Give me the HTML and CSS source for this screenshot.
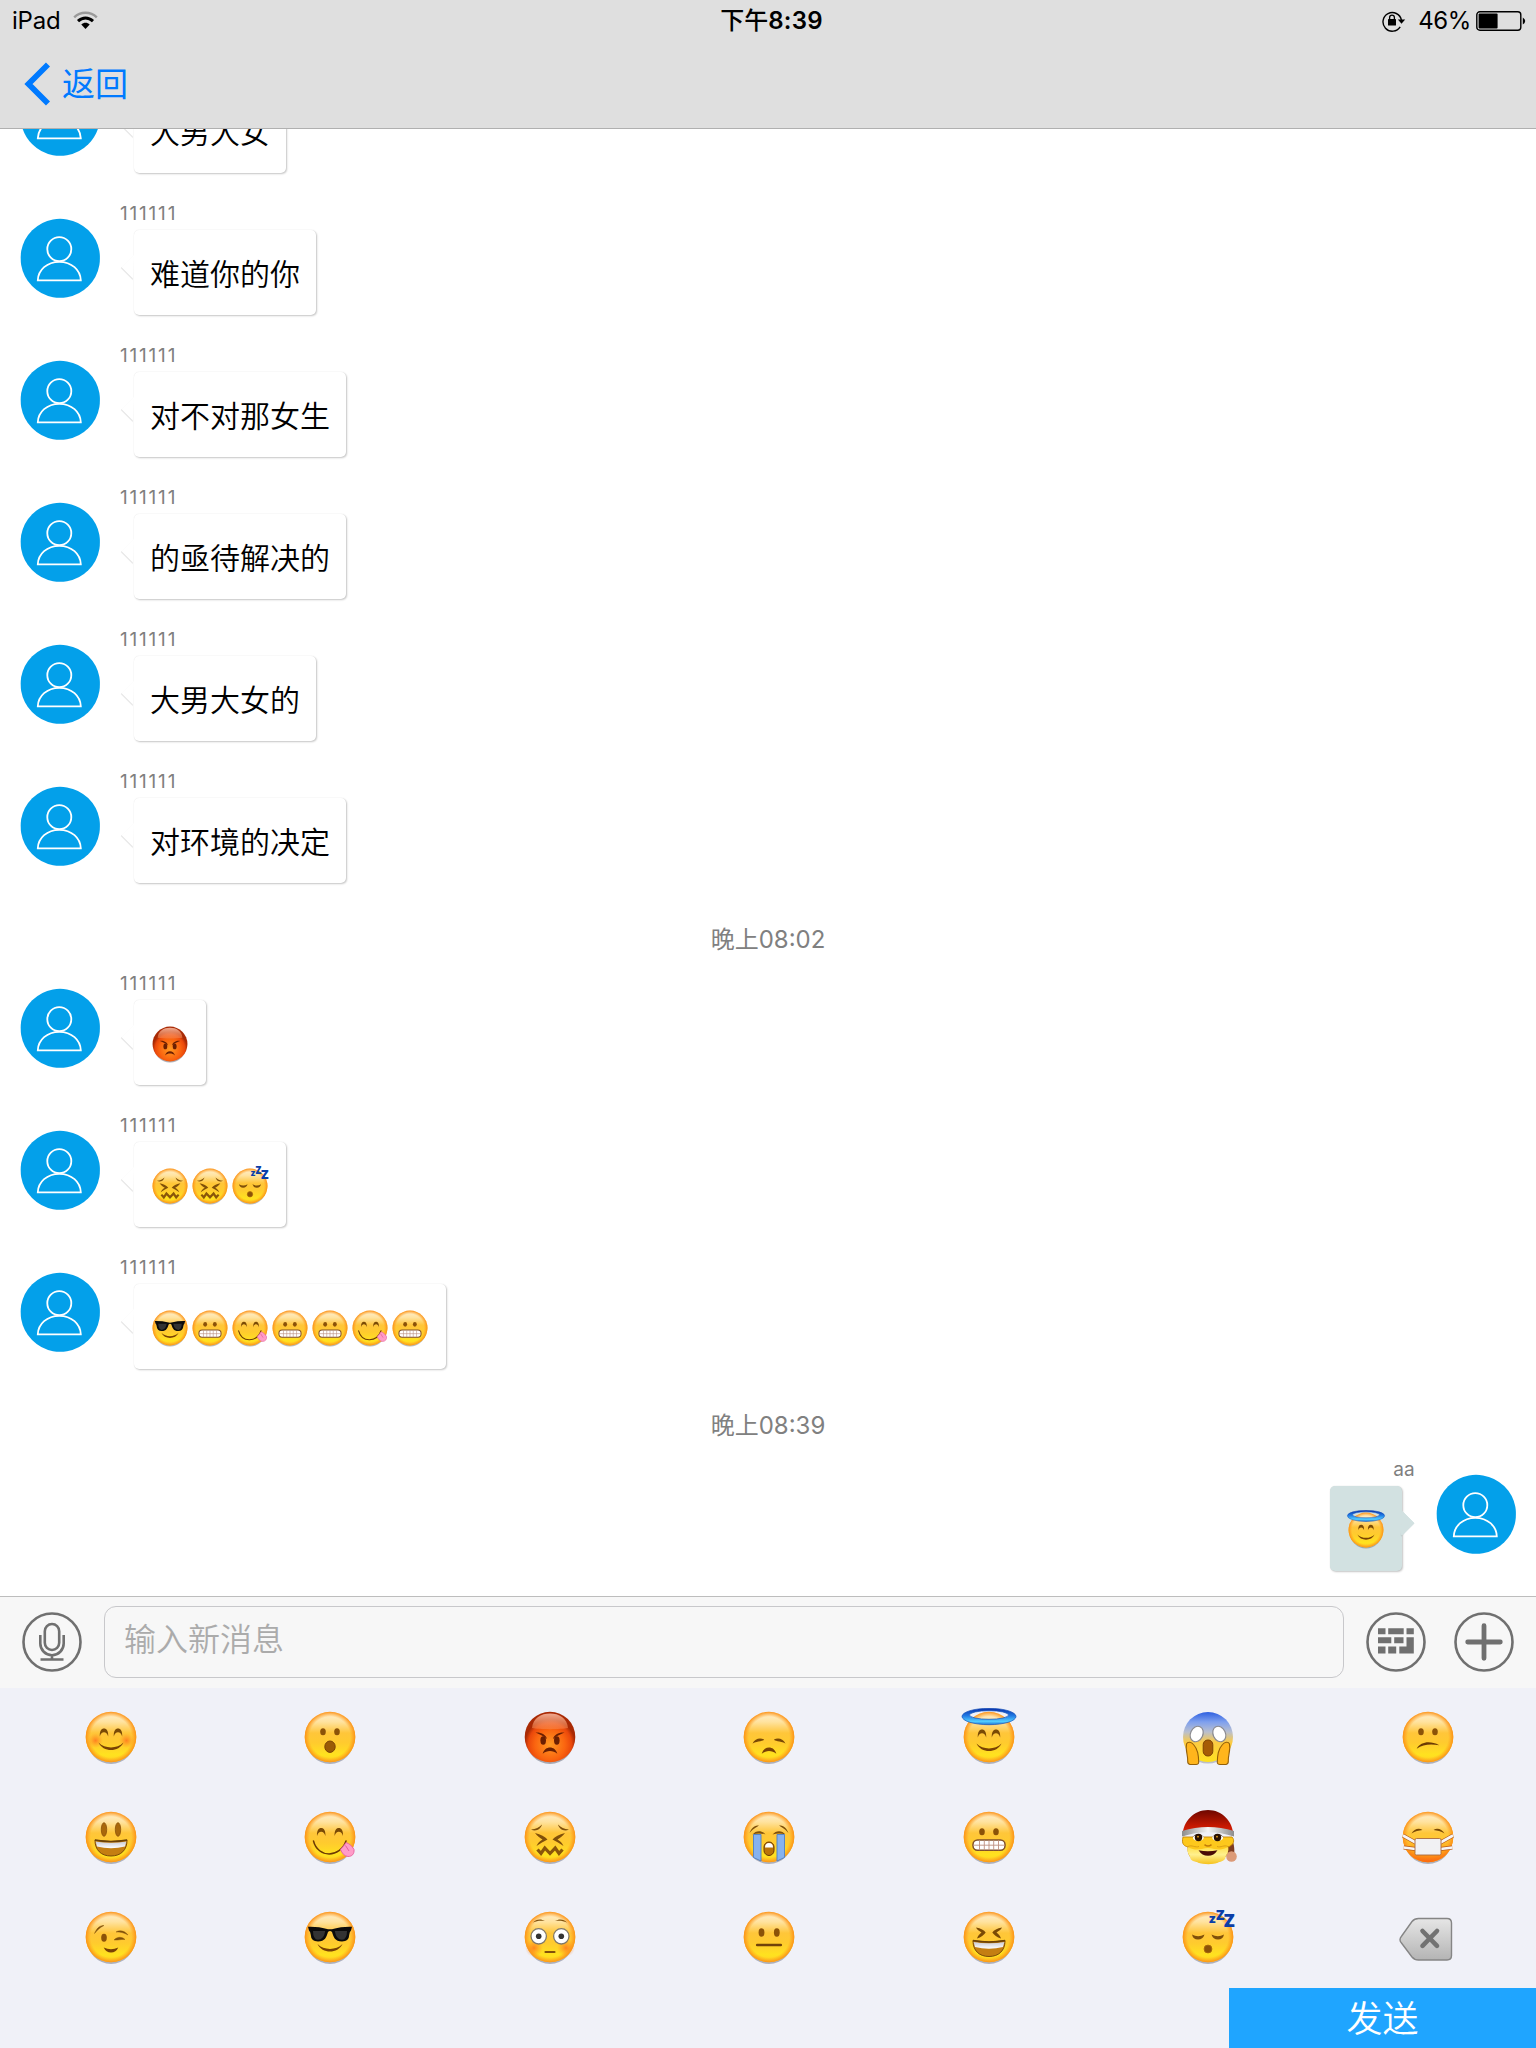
FILE: index.html
```html
<!DOCTYPE html>
<html lang="zh-CN">
<head>
<meta charset="utf-8">
<title>聊天</title>
<link rel="stylesheet" href="styles.css">
</head>
<body>
<svg class="sprite" width="0" height="0" aria-hidden="true">
  <defs>
    <linearGradient id="skin" x1="0" y1="0" x2="0" y2="1"><stop offset="0" stop-color="#fff0cf"/><stop offset=".2" stop-color="#ffe3a0"/><stop offset=".42" stop-color="#ffc63a"/><stop offset=".62" stop-color="#ffcb2e"/><stop offset=".85" stop-color="#ffe21f"/><stop offset="1" stop-color="#ffd324"/></linearGradient>
    <radialGradient id="edge"><stop offset=".8" stop-color="#ff9d1e" stop-opacity="0"/><stop offset="1" stop-color="#fb9218"/></radialGradient>
    <radialGradient id="blush"><stop offset="0" stop-color="#ff6a1c" stop-opacity=".75"/><stop offset="1" stop-color="#ff8a1c" stop-opacity="0"/></radialGradient>
    <radialGradient id="rage" cx=".5" cy=".65"><stop offset="0" stop-color="#ff9a22"/><stop offset=".6" stop-color="#fa6410"/><stop offset=".85" stop-color="#ea480b"/><stop offset="1" stop-color="#a92a05"/></radialGradient>
    <linearGradient id="gloss" x1="0" y1="0" x2="0" y2="1"><stop offset="0" stop-color="#f6b7a0" stop-opacity=".9"/><stop offset="1" stop-color="#f98a50" stop-opacity=".5"/></linearGradient>
    <linearGradient id="fear" x1="0" y1="0" x2="0" y2="1"><stop offset="0" stop-color="#2e5fe0"/><stop offset=".2" stop-color="#7fa0ee"/><stop offset=".4" stop-color="#b9bfce"/><stop offset=".6" stop-color="#fbca45"/><stop offset="1" stop-color="#ffe21f"/></linearGradient>
    <linearGradient id="halo" x1="0" y1="0" x2="0" y2="1"><stop offset="0" stop-color="#0a2fa8"/><stop offset=".45" stop-color="#2079e4"/><stop offset=".8" stop-color="#52cdff"/><stop offset="1" stop-color="#1f77d8"/></linearGradient>
    <linearGradient id="hat" x1="0" y1="0" x2="0" y2="1"><stop offset="0" stop-color="#6d0700"/><stop offset=".6" stop-color="#c41800"/><stop offset="1" stop-color="#e02810"/></linearGradient>
    <linearGradient id="band"><stop offset="0" stop-color="#8d8d8d"/><stop offset=".5" stop-color="#f4f4f4"/><stop offset="1" stop-color="#8d8d8d"/></linearGradient>
    <linearGradient id="beard" x1="0" y1="0" x2="0" y2="1"><stop offset="0" stop-color="#ffe14e"/><stop offset=".45" stop-color="#fff08e"/><stop offset="1" stop-color="#f6c21c"/></linearGradient>
    <linearGradient id="key" x1="0" y1="0" x2="0" y2="1"><stop offset="0" stop-color="#e6e6e6"/><stop offset="1" stop-color="#b4b4b4"/></linearGradient>
    <linearGradient id="fever" x1="0" y1="0" x2="0" y2="1"><stop offset=".5" stop-color="#ff8a1c" stop-opacity="0"/><stop offset="1" stop-color="#fb6a10"/></linearGradient>
    <linearGradient id="teeth" x1="0" y1="0" x2="0" y2="1"><stop offset="0" stop-color="#c9c9d2"/><stop offset="1" stop-color="#fff"/></linearGradient>

    <g id="base"><ellipse cy="2.2" rx="24" ry="24.8" fill="#5b5f70" opacity=".45"/><circle r="25.3" fill="url(#skin)"/><circle r="25.3" fill="url(#edge)"/></g>
    <path id="happy-eye" d="M-4.2 3.5C-4.5-2-2.6-4.5 0-4.5S4.5-2 4.2 3.5C3.2 .3 2 -.8 0 -.8S-3.2 .3-4.2 3.5Z" fill="#7a4a05"/>
    <g id="dots" fill="#8b5208"><ellipse cx="-7" cy="-5.3" rx="2.8" ry="3.5"/><ellipse cx="7" cy="-5.3" rx="2.8" ry="3.5"/></g>
    <path id="smile" d="M-12.5 5.5C-6 12 6 12 12.5 5.5C8 15.5-8 15.5-12.5 5.5Z" fill="#7a4204"/>
    <path id="frown" d="M-7.3 16.7C-5 8.5 5 8.5 7.3 16.7C3 13-3 13-7.3 16.7Z" fill="#7a4204"/>
    <g id="grin"><path d="M-16 3.2Q0 6 16 3.2C16 13 10 19 0 19S-16 13-16 3.2Z" fill="#c47e12" stroke="#7a4a08" stroke-width="1"/><path d="M-15.4 4.4Q0 7 15.4 4.4L14 9.5Q0 13-14 9.5Z" fill="url(#teeth)"/><path d="M-16.2 3Q0 6 16.2 3" fill="none" stroke="#6b4108" stroke-width="1.6"/></g>

    <symbol id="e-blush" viewBox="-29 -29 58 58"><use href="#base"/><circle cx="-15.5" cy="3.5" r="7.5" fill="url(#blush)"/><circle cx="15.5" cy="3.5" r="7.5" fill="url(#blush)"/><use href="#happy-eye" x="-7" y="-4"/><use href="#happy-eye" x="7" y="-4"/><use href="#smile"/></symbol>
    <symbol id="e-hushed" viewBox="-29 -29 58 58"><use href="#base"/><use href="#dots"/><ellipse cy="9.7" rx="5.2" ry="5.7" fill="#9a5a06" stroke="#7a4204"/></symbol>
    <symbol id="e-rage" viewBox="-29 -29 58 58"><ellipse cy="2.2" rx="24" ry="24.8" fill="#5b5f70" opacity=".5"/><circle r="25.3" fill="url(#rage)"/><path d="M-18-9C-17-19-9-23.5 0-23.5S17-19 18-9C11-7.5-11-7.5-18-9Z" fill="url(#gloss)"/><g fill="#6b1f02"><ellipse cx="-6.8" cy="3.5" rx="2.8" ry="4.2"/><ellipse cx="6.8" cy="3.5" rx="2.8" ry="4.2"/><path d="M-14.5-4.5C-9-5-4-2.5-3 2C-6-1-10-2.5-14.5-4.5ZM14.5-4.5C9-5 4-2.5 3 2C6-1 10-2.5 14.5-4.5Z"/><path d="M-7.3 16.7C-5 8.5 5 8.5 7.3 16.7C3 13-3 13-7.3 16.7Z"/></g></symbol>
    <symbol id="e-sad" viewBox="-29 -29 58 58"><use href="#base"/><path d="M-16.5 6.5C-14 1.5-9 .5-5 2.5C-5 4.5-11 3.5-16.5 6.5ZM16.5 6.5C14 1.5 9 .5 5 2.5C5 4.5 11 3.5 16.5 6.5Z" fill="#7a4a05"/><use href="#frown"/></symbol>
    <symbol id="e-angel" viewBox="-29 -29 58 58"><use href="#base"/><use href="#happy-eye" x="-7" y="-3"/><use href="#happy-eye" x="7" y="-3"/><use href="#smile" y="1"/><path fill-rule="evenodd" d="M-27-20.5a27 8.2 0 1 1 54 0a27 8.2 0 1 1-54 0ZM-19.5-22a19.5 4.3 0 1 0 39 0a19.5 4.3 0 1 0-39 0Z" fill="url(#halo)" stroke="#1550b8" stroke-width=".7"/></symbol>
    <symbol id="e-scream" viewBox="-29 -29 58 58"><ellipse cy="2" rx="24" ry="24.6" fill="#5b5f70" opacity=".35"/><circle r="25" fill="url(#fear)"/><g fill="#fff" stroke="#8a8a90" stroke-width="1.2"><ellipse cx="-11.3" cy="-3" rx="6.2" ry="8" transform="rotate(25 -11.3 -3)"/><ellipse cx="11.3" cy="-3" rx="6.2" ry="8" transform="rotate(-25 11.3 -3)"/></g><rect x="-4.8" y="3" width="9.6" height="16" rx="4.6" fill="#a65c06" stroke="#7d4404"/><g fill="#ffb51c" stroke="#94600a" stroke-width="1.1"><path d="M-21.5 7C-20.5 4.5-17 4.5-14.5 7.5C-10 12.5-9.5 18-9.3 25.5Q-9.5 27.5-12 27.5H-18Q-20.5 27-20.3 24C-20 18-22.8 13-21.5 7Z"/><path d="M21.5 7C20.5 4.5 17 4.5 14.5 7.5C10 12.5 9.5 18 9.3 25.5Q9.5 27.5 12 27.5H18Q20.5 27 20.3 24C20 18 22.8 13 21.5 7Z"/></g></symbol>
    <symbol id="e-confused" viewBox="-29 -29 58 58"><use href="#base"/><use href="#dots"/><path d="M-11.3 11.7C-7 4.5 2 3.5 11.3 8.2C3 6.8-5 7-11.3 11.7Z" fill="#6b3a04"/></symbol>
    <symbol id="e-smiley" viewBox="-29 -29 58 58"><use href="#base"/><g fill="#a9680b" stroke="#8b5208" stroke-width=".8"><ellipse cx="-7" cy="-7.5" rx="2.7" ry="6.8"/><ellipse cx="7" cy="-7.5" rx="2.7" ry="6.8"/></g><use href="#grin"/></symbol>
    <symbol id="e-yum" viewBox="-29 -29 58 58"><use href="#base"/><use href="#happy-eye" x="-8.8" y="-4.5"/><use href="#happy-eye" x="8.8" y="-4.5"/><path d="M-16.5 4C-12 21.5 10 21 16 4" fill="none" stroke="#6b3a04" stroke-width="1.5" stroke-linecap="round"/><path d="M16 5.5C14 9 12 10.5 10.5 12.5C12 16 14 19 18 19.5C22 19.5 24.5 17 24 12.5C22 9 20 7 16 5.5Z" fill="#ff9cc8" stroke="#e5609b" stroke-width=".9"/><path d="M15.5 8.5L19 14" stroke="#e5609b"/></symbol>
    <symbol id="e-confounded" viewBox="-29 -29 58 58"><use href="#base"/><path d="M-19-7.5C-14-8-11-9.5-8-12.5C-9-8-14-5-19-7.5ZM19-7.5C14-8 11-9.5 8-12.5C9-8 14-5 19-7.5ZM-15-4C-9-2.5-5-.5-2.5 2.5C-6 4.5-10 6.5-13.5 9C-12 5.5-10 4-7.5 2.5C-10 1-13-1-15-4ZM15-4C9-2.5 5-.5 2.5 2.5C6 4.5 10 6.5 13.5 9C12 5.5 10 4 7.5 2.5C10 1 13-1 15-4Z" fill="#80500a"/><path d="M-12.5 12.5L-9 16.5L-5.2 11L0 16.5L5.2 11L9 16.5L12.5 12.5" fill="none" stroke="#8a560a" stroke-width="3.2"/></symbol>
    <symbol id="e-sob" viewBox="-29 -29 58 58"><use href="#base"/><path d="M-19.5-4C-17-10-14-11.5-10-11.5C-14-9-16-8-19.5-4ZM19.5-4C17-10 14-11.5 10-11.5C14-9 16-8 19.5-4ZM-16.5-2.5C-13-7-7-7-3.5-2.5C-8-4-12-4-16.5-2.5ZM16.5-2.5C13-7 7-7 3.5-2.5C8-4 12-4 16.5-2.5Z" fill="#80500a"/><path d="M-15.5-2.5H-8V24L-15.5 20.5ZM15.5-2.5H8V24L15.5 20.5Z" fill="#86b2ee" stroke="#4b7fc8" stroke-width=".9"/><rect x="-5" y="5" width="10" height="13.5" rx="5" fill="#bb7408" stroke="#6b3a04"/><path d="M-4 10.5Q-4 6 0 6T4 10.5Z" fill="#fff"/></symbol>
    <symbol id="e-grimace" viewBox="-29 -29 58 58"><use href="#base"/><use href="#dots"/><rect x="-16" y="3" width="32" height="10.3" rx="4.5" fill="#fff" stroke="#80502a" stroke-width="1.5"/><path d="M-16 8.2H16M-9.5 3.2V13.2M-4.7 3.2V13.2M0 3.2V13.2M4.7 3.2V13.2M9.5 3.2V13.2" stroke="#bd9080" stroke-width=".9"/></symbol>
    <symbol id="e-santa" viewBox="-29 -29 58 58"><path d="M19 3C26 0 27 10 26 20L20 18Z" fill="#7d3c22"/><circle cx="23.5" cy="19.5" r="5.3" fill="#dc9a78"/><path d="M-25 0C-27 8-23 9-20 10C-21 20-14 26 0 26S20 20 20 10C26 8 27 3 24 0Z" fill="#fdc81c" stroke="#c58708" stroke-width=".9"/><path d="M-20 10C-22 16-17 19-17.5 22C-15 25-11 24.5-9 26C-4 27.5 5 27.5 9 26C12 24.5 16 24.5 17.5 21C17 18 21.5 16 20 10C14 13 10 12.8 6 12Q0 10-6 12C-10 12.8-15 13-20 10Z" fill="url(#beard)"/><path d="M-20 9.5C-16 7.5-13 11-9 9.5M20 9.5C16 7.5 13 11 9 9.5" fill="none" stroke="#dca014"/><path d="M-25.5-1C-25-16-14-27 0-27S25-16 25.5-1Q0-13-25.5-1Z" fill="url(#hat)"/><path d="M-26-6Q0-14 26-6V-.5Q0-9-26-.5Z" fill="url(#band)"/><ellipse cx="-9.7" cy=".7" rx="5.4" ry="3.3" fill="#fff"/><ellipse cx="9.7" cy=".7" rx="5.4" ry="3.3" fill="#fff"/><g fill="#2a1202"><circle cx="-9.5" cy=".5" r="3.7"/><circle cx="9.5" cy=".5" r="3.7"/><path d="M-16 .5Q-10-6-4 0Q-10-4-16 .5ZM16 .5Q10-6 4 0Q10-4 16 .5Z"/></g><circle cx="-10" cy="-.3" r=".9" fill="#e8a020"/><circle cx="9" cy="-.3" r=".9" fill="#e8a020"/><path d="M-3.5 7.7Q0 10.5 3.5 7.7" fill="none" stroke="#c27a08" stroke-width="1.5"/><path d="M-9.5 13.2Q0 15.5 9.5 13.2Q6 18.7 0 18.7T-9.5 13.2Z" fill="#4a0c06"/></symbol>
    <symbol id="e-mask" viewBox="-29 -29 58 58"><use href="#base"/><circle r="25.3" fill="url(#fever)"/><path d="M-16.5-3.5C-14-8-9-9.5-5.5-7C-9-6.5-13-6-16.5-3.5ZM16.5-3.5C14-8 9-9.5 5.5-7C9-6.5 13-6 16.5-3.5Z" fill="#7a4a05"/><path d="M-25-1.5L-12.5 5.5M25-1.5L12.5 5.5M-24.3 10.5L-12.5 12M24.3 10.5L12.5 12" stroke="#b85a18" stroke-width="4"/><path d="M-25-1.5L-12.5 5.5M25-1.5L12.5 5.5M-24.5 10.5L-12.5 12M24.5 10.5L12.5 12" stroke="#f6f6f8" stroke-width="2.6"/><rect x="-13" y="1.5" width="26" height="16.5" rx="1.5" fill="#f1f1f3" stroke="#a86a40" stroke-width=".9"/></symbol>
    <symbol id="e-wink" viewBox="-29 -29 58 58"><use href="#base"/><ellipse cx="-7" cy=".8" rx="2.8" ry="4" fill="#8b5208"/><path d="M-16.5-3.5C-14-9.5-11-11.5-7-11.5C-11-9.5-13-7.5-16.5-3.5ZM5-5C9-7.5 14-6 17-2C13-4.5 9-5 5-5ZM3 3C6-.5 11-.5 14 2.5C10 2 7 3.5 3 3Z" fill="#80500a" stroke="#80500a" stroke-width=".4"/><path d="M-7.3 10.5Q0 14 7.3 10.5Q5 15.5 0 15.5T-7.3 10.5Z" fill="#7a4204"/></symbol>
    <symbol id="e-cool" viewBox="-29 -29 58 58"><use href="#base"/><use href="#smile" y="1.5"/><path d="M-22-10.2Q-11-10.5-4-8.2Q0-7.2 4-8.2Q11-10.5 22-10.2L21-6.5Q19.5-5 19.3-2.5Q19 4.5 12 4.5C5 4.5 3.5 0 2-5Q0-7-2-5C-3.5 0-5 4.5-12 4.5Q-19 4.5-19.3-2.5Q-19.5-5-21-6.5Z" fill="#0b0b0b"/><path d="M-17-6H-4.8Q-6 2.5-12 2.8-17 2.5-17-6ZM17-6H4.8Q6 2.5 12 2.8 17 2.5 17-6Z" fill="#333"/></symbol>
    <symbol id="e-flushed" viewBox="-29 -29 58 58"><use href="#base"/><circle cx="-16" cy="11" r="9" fill="url(#blush)"/><circle cx="16" cy="11" r="9" fill="url(#blush)"/><path d="M-17-14.5C-14-18-9-18.5-5-16C-9-16.5-13-16.5-17-14.5ZM17-14.5C14-18 9-18.5 5-16C9-16.5 13-16.5 17-14.5Z" fill="#80500a"/><g fill="#fff" stroke="#807868" stroke-width="1.3"><circle cx="-11.3" cy="-.7" r="7.7"/><circle cx="11.3" cy="-.7" r="7.7"/></g><circle cx="-11.3" cy="-.7" r="2.8" fill="#333"/><circle cx="11.3" cy="-.7" r="2.8" fill="#333"/><path d="M-4.5 15H4.5" stroke="#80500a" stroke-width="2.2" stroke-linecap="round"/></symbol>
    <symbol id="e-neutral" viewBox="-29 -29 58 58"><use href="#base"/><g fill="#8b5208"><ellipse cx="-7.5" cy="-4.5" rx="2.9" ry="4.2"/><ellipse cx="7.8" cy="-4.5" rx="2.9" ry="4.2"/></g><path d="M-11.8 8H11.8" stroke="#70420a" stroke-width="2.6" stroke-linecap="round"/></symbol>
    <symbol id="e-laugh" viewBox="-29 -29 58 58"><use href="#base"/><path d="M-13-9.5C-8-8.5-5-7-3.3-4.5C-5-2.5-8 .5-12 1.5C-11-1.5-9.5-3-7.5-4.5C-10-6-12-7.5-13-9.5ZM13-9.5C8-8.5 5-7 3.3-4.5C5-2.5 8 .5 12 1.5C11-1.5 9.5-3 7.5-4.5C10-6 12-7.5 13-9.5Z" fill="#7a4a05"/><use href="#grin" y=".5"/></symbol>
    <symbol id="e-sleep" viewBox="-29 -29 58 58"><use href="#base"/><path d="M-16-2.5Q-10 1-3.5-2.5Q-5 2.5-10 2.5T-16-2.5ZM16-2.5Q10 1 3.5-2.5Q5 2.5 10 2.5T16-2.5Z" fill="#80500a"/><circle cy="12" r="3.9" fill="#8b5208" stroke="#a9680b"/><g class="zzz"><text x="1" y="-14" font-size="13">z</text><text x="8" y="-17" font-size="14">Z</text><text x="15.8" y="-9.7" font-size="18">Z</text></g></symbol>
    <symbol id="e-delete" viewBox="-29 -29 58 58"><path d="M-28 2.7Q-28 1-26.5-.8L-16-15.5Q-13.5-18.5-9.5-18.5H19Q23.5-18.5 23.5-14V18.5Q23.5 23 19 23H-9.5Q-13.5 23-16 20L-26.5 6Q-28 4.5-28 2.7Z" fill="url(#key)" stroke="#858585" stroke-width="1.4"/><path d="M-5.5-6L9 8.8M9-6L-5.5 8.8" stroke="#727272" stroke-width="4.6" stroke-linecap="round"/></symbol>

    <symbol id="person" viewBox="0 0 80 80"><path d="M33 1.4Q40 .3 47 1.4A39.6 39.6 0 0 1 79.4 33Q80.4 40 79.4 47A39.6 39.6 0 0 1 47 79.2Q40 80.2 33 79.2A39.6 39.6 0 0 1 1.2 47Q.2 40 1.2 33A39.6 39.6 0 0 1 33 1.4Z" fill="#03a0ea"/><g fill="none" stroke="#fff" stroke-width="1.8"><circle cx="39.3" cy="31.2" r="12"/><path d="M17.8 62.3C18.2 52 27 43.8 39.3 43.8S60.4 52 60.8 62.3Z"/></g></symbol>
  </defs>
</svg>

<header class="header">
  <div class="status">
    <div class="status-left">iPad
      <svg width="25" height="19" viewBox="0 0 25 19" fill="none"><path d="M1.2 6.3C7.5 .3 17.5 .3 23.8 6.3" stroke="#9a9a9a" stroke-width="2.4"/><path d="M5 10.2C9.5 6 15.5 6 20 10.2" stroke="#000" stroke-width="3"/><path d="M8.3 13.6C10.8 11.2 14.2 11.2 16.7 13.6L12.5 18Z" fill="#000"/></svg>
    </div>
    <div class="status-time">下午<b>8:39</b></div>
    <div class="status-right">
      <svg width="24" height="22" viewBox="0 0 24 22"><path d="M18.2 16.8A9.3 9.3 0 1 1 19.4 10" fill="none" stroke="#000" stroke-width="1.4"/><path d="M15.8 9.5H23.2L19.5 13.8Z"/><rect x="6" y="9" width="8" height="6.5" rx=".6"/><path d="M7.6 9.5V7.5Q7.6 5.2 10 5.2T12.4 7.5V9.5" fill="none" stroke="#000" stroke-width="1.3"/></svg>
      <span>46%</span>
      <svg width="50" height="20" viewBox="0 0 50 20"><rect x=".8" y=".8" width="44" height="18.4" rx="3" fill="none" stroke="#000" stroke-width="1.4"/><rect x="2.6" y="2.6" width="19" height="14.8" rx="1"/><path d="M46.8 6.5Q49.2 8 49.2 10T46.8 13.5Z"/></svg>
    </div>
  </div>
  <nav class="nav">
    <svg width="27" height="44" viewBox="0 0 27 44"><path d="M25 2.5L5.5 22L25 41.5" fill="none" stroke="#007aff" stroke-width="5.8"/></svg>
    <span>返回</span>
  </nav>
</header>

<main class="chat">
  <div class="thread">
    <div class="msg"><svg class="avatar"><use href="#person"/></svg><div class="body"><div class="name"></div><div class="bubble">大男大女</div></div></div>
    <div class="msg"><svg class="avatar"><use href="#person"/></svg><div class="body"><div class="name">111111</div><div class="bubble">难道你的你</div></div></div>
    <div class="msg"><svg class="avatar"><use href="#person"/></svg><div class="body"><div class="name">111111</div><div class="bubble">对不对那女生</div></div></div>
    <div class="msg"><svg class="avatar"><use href="#person"/></svg><div class="body"><div class="name">111111</div><div class="bubble">的亟待解决的</div></div></div>
    <div class="msg"><svg class="avatar"><use href="#person"/></svg><div class="body"><div class="name">111111</div><div class="bubble">大男大女的</div></div></div>
    <div class="msg"><svg class="avatar"><use href="#person"/></svg><div class="body"><div class="name">111111</div><div class="bubble">对环境的决定</div></div></div>
    <div class="date">晚上08:02</div>
    <div class="msg"><svg class="avatar"><use href="#person"/></svg><div class="body"><div class="name">111111</div><div class="bubble"><svg class="emo"><use href="#e-rage"/></svg></div></div></div>
    <div class="msg"><svg class="avatar"><use href="#person"/></svg><div class="body"><div class="name">111111</div><div class="bubble"><svg class="emo"><use href="#e-confounded"/></svg><svg class="emo"><use href="#e-confounded"/></svg><svg class="emo"><use href="#e-sleep"/></svg></div></div></div>
    <div class="msg"><svg class="avatar"><use href="#person"/></svg><div class="body"><div class="name">111111</div><div class="bubble"><svg class="emo"><use href="#e-cool"/></svg><svg class="emo"><use href="#e-grimace"/></svg><svg class="emo"><use href="#e-yum"/></svg><svg class="emo"><use href="#e-grimace"/></svg><svg class="emo"><use href="#e-grimace"/></svg><svg class="emo"><use href="#e-yum"/></svg><svg class="emo"><use href="#e-grimace"/></svg></div></div></div>
    <div class="date">晚上08:39</div>
    <div class="msg mine"><svg class="avatar"><use href="#person"/></svg><div class="body"><div class="name">aa</div><div class="bubble"><svg class="emo"><use href="#e-angel"/></svg></div></div></div>
  </div>
</main>

<section class="toolbar">
  <svg class="tool" viewBox="-30 -30 60 60"><circle r="28.5"/><rect x="-7.2" y="-18" width="14.4" height="26" rx="7.2"/><path d="M-11.7-7V1.5A11.7 11.7 0 0 0 11.7 1.5V-7M0 13V17.5M-11.5 17.5H11.5"/></svg>
  <div class="field">输入新消息</div>
  <svg class="tool" viewBox="-30 -30 60 60"><circle r="28.5"/><path class="solid" d="M-18-13.7h7.5v6h-7.5zM-7.8-13.7h15.5v6H-7.8zM10.5-13.7h7.3v6h-7.3zM-18-4.7h13.3v6H-18zM-1.8-4.7h9.3v6h-9.3zM10.5-4.7h7.3v16.2H3.3V4.4h7.2zM-18 4.5h7.5v7h-7.5zM-7.8 4.5h8v7h-8z"/></svg>
  <svg class="tool" viewBox="-30 -30 60 60"><circle r="28.5"/><path class="thick" d="M-16.3 0H16.3M0-16.3V16.3"/></svg>
</section>

<section class="panel">
  <div class="grid">
    <svg><use href="#e-blush"/></svg><svg><use href="#e-hushed"/></svg><svg><use href="#e-rage"/></svg><svg><use href="#e-sad"/></svg><svg><use href="#e-angel"/></svg><svg><use href="#e-scream"/></svg><svg><use href="#e-confused"/></svg>
    <svg><use href="#e-smiley"/></svg><svg><use href="#e-yum"/></svg><svg><use href="#e-confounded"/></svg><svg><use href="#e-sob"/></svg><svg><use href="#e-grimace"/></svg><svg><use href="#e-santa"/></svg><svg><use href="#e-mask"/></svg>
    <svg><use href="#e-wink"/></svg><svg><use href="#e-cool"/></svg><svg><use href="#e-flushed"/></svg><svg><use href="#e-neutral"/></svg><svg><use href="#e-laugh"/></svg><svg><use href="#e-sleep"/></svg><svg><use href="#e-delete"/></svg>
  </div>
  <button class="send">发送</button>
</section>
</body>
</html>
```
FILE: styles.css
```css
* { box-sizing: border-box; }
body {
  margin: 0;
  width: 1536px;
  height: 2048px;
  display: flex;
  flex-direction: column;
  overflow: hidden;
  background: #fff;
  color: #000;
  font-family: Inter, "Noto Sans CJK SC", sans-serif;
}
svg { display: block; flex: none; }
.sprite { position: absolute; }
.zzz { font-family: "Open Sans", sans-serif; font-weight: 800; fill: #0b3ea8; }

.header {
  height: 129px;
  flex: none;
  background: #dfdfdf;
  border-bottom: 1px solid #b0b0b0;
}
.status {
  height: 40px;
  display: grid;
  grid-template-columns: 1fr auto 1fr;
  align-items: center;
  padding: 1px 10px 0 12px;
  font-size: 24px;
  line-height: 38px;
}
.status-left, .status-right { display: flex; align-items: center; }
.status-left { gap: 12px; letter-spacing: -.2px; }
.status-right { justify-content: flex-end; }
.status-right span { margin: 0 5px 0 12px; letter-spacing: -.4px; }
.status-time { font-weight: 500; padding-left: 5px; }
.status-time b { font-weight: 600; letter-spacing: .2px; }
.nav {
  height: 88px;
  display: flex;
  align-items: center;
  padding-left: 23px;
  gap: 12px;
  color: #007aff;
  font-size: 33px;
}
.nav span { padding-bottom: 4px; }

.chat { flex: 1; min-height: 0; overflow: hidden; }
.thread { margin-top: -71px; }
.msg { height: 142px; display: flex; padding: 0 20px; }
.avatar { width: 80px; height: 80px; margin-top: 18px; }
.body { display: flex; flex-direction: column; align-items: flex-start; margin-left: 20px; }
.name { height: 30px; line-height: 27px; font-size: 19px; color: #808080; letter-spacing: 1.8px; }
.bubble {
  position: relative;
  height: 85px;
  margin-left: 14px;
  padding: 3px 16px 0;
  display: flex;
  align-items: center;
  border-radius: 5px;
  background: #fff;
  box-shadow: 1px 1px 2px rgba(0, 0, 0, .22), 0 0 1px rgba(0, 0, 0, .12);
  font-size: 30px;
  font-weight: 350;
  line-height: 44px;
  white-space: nowrap;
}
.bubble::before {
  content: "";
  position: absolute;
  left: -9px;
  top: 28px;
  width: 18px;
  height: 18px;
  background: #fff;
  transform: rotate(45deg);
  box-shadow: 0 1px 1px rgba(0, 0, 0, .12);
  clip-path: polygon(0 0, 0 110%, 100% 110%);
}
.emo { width: 40px; height: 40px; }
.date { height: 60px; line-height: 59px; text-align: center; font-size: 24px; color: #808080; }

.mine { flex-direction: row-reverse; }
.mine .body { align-items: flex-end; margin: 0 20px 0 0; }
.mine .name { padding-right: 1px; letter-spacing: .2px; }
.mine .bubble { margin: 0 14px 0 0; background: #d2e1e1; }
.mine .bubble::before { left: auto; right: -9px; background: #d2e1e1; clip-path: polygon(0 0, 110% 0, 110% 110%, 100% 110%); }

.toolbar {
  height: 92px;
  flex: none;
  display: flex;
  align-items: center;
  padding: 0 22px 1px;
  background: #f7f7f7;
  border-top: 1px solid #bdbdbd;
}
.tool { width: 60px; height: 60px; fill: none; stroke: #707070; stroke-width: 2.6; }
.tool .solid { fill: #707070; stroke: none; }
.tool .thick { stroke-width: 4.8; stroke-linecap: round; }
.tool + .tool { margin-left: 28px; }
.field {
  flex: 1;
  height: 72px;
  margin: 0 22px;
  padding: 0 19px;
  border: 1px solid #c8c8cb;
  border-radius: 12px;
  color: #ababab;
  font-size: 32px;
  line-height: 66px;
  font-weight: 350;
}

.panel { height: 360px; flex: none; display: flex; flex-direction: column; background: #f0f1f8; }
.grid {
  margin-top: -2px;
  height: 302px;
  padding: .5px 0 0 1px;
  display: grid;
  grid-template-columns: repeat(7, 219.5px);
  grid-auto-rows: 100px;
  place-items: center;
}
.grid svg { width: 58px; height: 58px; overflow: visible; }
.send {
  align-self: flex-end;
  width: 307px;
  height: 60px;
  padding: 0 0 4px;
  border: 0;
  background: #1fa5ff;
  color: #fff;
  font: 350 36px/56px "Noto Sans CJK SC", sans-serif;
}
```
